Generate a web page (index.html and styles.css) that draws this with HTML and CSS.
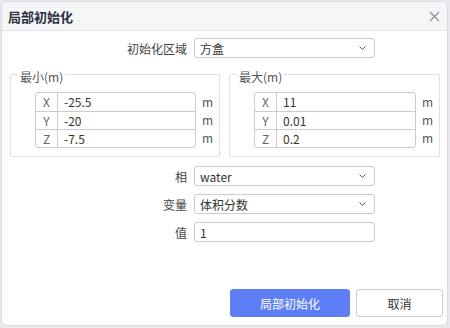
FILE: index.html
```html
<!DOCTYPE html>
<html lang="zh-CN">
<head>
  <meta charset="UTF-8" />
  <meta name="viewport" content="width=device-width, initial-scale=1.0"/>
  <title>局部初始化</title>
  <link rel="stylesheet" href="styles.css">
</head>
<body>

  <div class="dialog">
    <div class="dialog-header">
      <h2>局部初始化</h2>
      <span class="close">
        <svg width="11" height="11" viewBox="0 0 11 11"><path d="M1 1L10 10M10 1L1 10" stroke="#8a8f99" stroke-width="1.2" fill="none"/></svg>
      </span>
    </div>

    <div class="dialog-body">
      <div class="form-row">
        <label>初始化区域</label>
        <div class="select">
          <span>方盒</span>
          <svg class="chevron" width="7" height="4" viewBox="0 0 7 4"><path d="M0.5 0.5L3.5 3.3L6.5 0.5" stroke="#555" stroke-width="1" fill="none"/></svg>
        </div>
      </div>

      <div class="ranges">
        <fieldset class="range">
          <legend>最小(m)</legend>
          <div class="coords">
            <div class="coord-table">
              <div class="axis">X</div><div class="val">-25.5</div>
              <div class="axis">Y</div><div class="val">-20</div>
              <div class="axis">Z</div><div class="val">-7.5</div>
            </div>
            <div class="units"><span>m</span><span>m</span><span>m</span></div>
          </div>
        </fieldset>
        <fieldset class="range">
          <legend>最大(m)</legend>
          <div class="coords">
            <div class="coord-table">
              <div class="axis">X</div><div class="val">11</div>
              <div class="axis">Y</div><div class="val">0.01</div>
              <div class="axis">Z</div><div class="val">0.2</div>
            </div>
            <div class="units"><span>m</span><span>m</span><span>m</span></div>
          </div>
        </fieldset>
      </div>

      <div class="form-row">
        <label>相</label>
        <div class="select">
          <span>water</span>
          <svg class="chevron" width="7" height="4" viewBox="0 0 7 4"><path d="M0.5 0.5L3.5 3.3L6.5 0.5" stroke="#555" stroke-width="1" fill="none"/></svg>
        </div>
      </div>
      <div class="form-row">
        <label>变量</label>
        <div class="select">
          <span>体积分数</span>
          <svg class="chevron" width="7" height="4" viewBox="0 0 7 4"><path d="M0.5 0.5L3.5 3.3L6.5 0.5" stroke="#555" stroke-width="1" fill="none"/></svg>
        </div>
      </div>
      <div class="form-row">
        <label>值</label>
        <div class="select"><span>1</span></div>
      </div>
    </div>

    <div class="dialog-footer">
      <button class="btn btn-primary">局部初始化</button>
      <button class="btn">取消</button>
    </div>
  </div>

</body>
</html>
```

FILE: styles.css
```css
* { box-sizing: border-box; margin: 0; padding: 0; }
body { background: #e7e9ee; font-family: "Noto Sans CJK SC", sans-serif; font-size: 12px; color: #333; }

.dialog {
  margin: 1px;
  width: 447px;
  height: 325px;
  background: #fff;
  border: 1px solid #d8dbe1;
  border-radius: 6px;
  overflow: hidden;
  display: flex;
  flex-direction: column;
}

.dialog-header {
  height: 29px;
  background: #f5f6f8;
  border-bottom: 1px solid #e3e5e9;
  display: flex;
  align-items: center;
  justify-content: space-between;
  padding: 0 6px 0 6px;
}
.dialog-header h2 { font-size: 13px; font-weight: bold; color: #2a3142; }
.close { display: flex; margin-right: 1px; }

.dialog-body { padding-top: 7px; }

.form-row {
  display: flex;
  align-items: center;
  height: 20px;
  margin-bottom: 8px;
}
.form-row label {
  width: 185px;
  margin-right: 7px;
  text-align: right;
  color: #444;
}
.select {
  width: 181px;
  height: 20px;
  border: 1px solid #c9ccd3;
  border-radius: 3px;
  display: flex;
  align-items: center;
  justify-content: space-between;
  padding: 0 8px 0 5px;
  color: #333;
}

.ranges {
  display: grid;
  grid-template-columns: 210px 211px;
  column-gap: 9px;
  margin: -3px 0 9px 8px;
}
.range {
  border: 1px solid #dcdfe4;
  border-radius: 2px;
  padding: 7px 8px 8px 24px;
}
.range legend {
  margin-left: -17px;
  padding: 6px 2px 0;
  line-height: 16px;
  color: #555;
}
.coords { display: flex; }
.coord-table {
  flex: 1;
  display: grid;
  grid-template-columns: 22px 1fr;
  grid-template-rows: repeat(3, 18px);
  border: 1px solid #c9ccd2;
  border-radius: 3px;
}
.coord-table div { line-height: 17px; }
.coord-table div:nth-child(n+3) { border-top: 1px solid #c9ccd2; }
.axis { border-right: 1px solid #c9ccd2; text-align: center; color: #666; }
.val { padding-left: 6px; color: #333; }
.units {
  width: 9px;
  margin-left: 6px;
  display: grid;
  grid-template-rows: repeat(3, 18px);
  padding-top: 1px;
  color: #555;
}
.units span { line-height: 18px; }

.dialog-footer {
  margin-top: auto;
  display: flex;
  justify-content: flex-end;
  gap: 6px;
  padding: 0 4px 8px 0;
}
.btn {
  height: 28px;
  width: 87px;
  border: 1px solid #c8ccd4;
  border-radius: 3px;
  background: #fff;
  color: #333;
  font-family: inherit;
  font-size: 12px;
}
.btn-primary {
  width: 120px;
  background: #5d7ef5;
  border-color: #5d7ef5;
  color: #fff;
}
```
